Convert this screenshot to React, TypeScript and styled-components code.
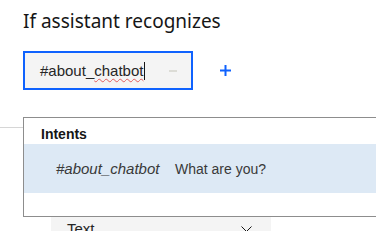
import React from 'react';
import styled, { createGlobalStyle } from 'styled-components';

const GlobalStyle = createGlobalStyle`
  html, body {
    margin: 0;
    padding: 0;
    background: #ffffff;
    overflow: hidden;
  }
  body {
    font-family: "Noto Sans", "Liberation Sans", sans-serif;
    color: #161616;
  }
`;

const Page = styled.div`
  width: 376px;
  height: 231px;
  position: relative;
  overflow: hidden;
`;

const Header = styled.div`
  padding: 7px 0 0 23px;
`;

const Title = styled.h2`
  margin: 0;
  font-family: "Noto Sans", sans-serif;
  font-weight: 400;
  font-size: 19px;
  line-height: 28px;
  color: #161616;
`;

const ConditionRow = styled.div`
  display: flex;
  align-items: center;
  gap: 26px;
  margin-top: 16px;
`;

const InputBox = styled.div`
  box-sizing: border-box;
  width: 170px;
  height: 39px;
  border: 2px solid #0f62fe;
  background: #f4f4f4;
  display: flex;
  align-items: center;
  padding: 0 14px 0 15px;
`;

const InputText = styled.span`
  flex: 1;
  font-family: "Liberation Sans", Arial, sans-serif;
  font-size: 15px;
  color: #262626;
  display: flex;
  align-items: center;
`;

const Squiggle = styled.span`
  text-decoration: underline wavy #e25c5c;
  text-decoration-thickness: 1px;
  text-underline-offset: 2px;
`;

const Caret = styled.span`
  display: inline-block;
  width: 1px;
  height: 18px;
  background: #161616;
  margin-left: 1px;
`;

const Minus = styled.span`
  width: 8px;
  height: 2px;
  background: #dcdcd6;
`;

const IconButton = styled.button`
  border: none;
  background: none;
  padding: 0;
  width: 12px;
  height: 12px;
  display: flex;
  align-items: center;
  justify-content: center;
  cursor: pointer;
`;

const Section = styled.div`
  position: relative;
  margin-top: 27px;
  height: 114px;
`;

const Divider = styled.div`
  position: absolute;
  top: 10px;
  left: 0;
  right: 0;
  height: 1px;
  background: #d6d6d6;
`;

const SelectBox = styled.div`
  position: absolute;
  top: 100px;
  left: 51px;
  width: 220px;
  height: 40px;
  background: #f4f4f4;
  display: flex;
  align-items: flex-start;
  justify-content: space-between;
  box-sizing: border-box;
  padding: 2px 19px 0 16px;
  font-family: "Liberation Sans", Arial, sans-serif;
  font-size: 15px;
  color: #262626;
  line-height: 19px;
`;

const Chevron = styled.svg`
  margin-top: 7px;
`;

const Menu = styled.div`
  position: absolute;
  top: 0;
  left: 23px;
  width: 380px;
  height: 100px;
  box-sizing: border-box;
  border: 1px solid #8d8d8d;
  background: #ffffff;
`;

const MenuHeading = styled.div`
  height: 26px;
  box-sizing: border-box;
  padding: 8px 0 0 17px;
  font-family: "Liberation Sans", Arial, sans-serif;
  font-weight: 700;
  font-size: 14px;
  line-height: 16px;
  color: #161616;
`;

const MenuItem = styled.div<{ $active?: boolean }>`
  height: 49px;
  display: flex;
  align-items: center;
  padding-left: 32px;
  background: ${p => (p.$active ? '#dde9f5' : 'transparent')};
  font-family: "Liberation Sans", Arial, sans-serif;
  font-size: 15px;
  color: #393939;
`;

const IntentName = styled.span`
  font-style: italic;
  width: 119px;
`;

const Example = styled.span`
  font-size: 14px;
`;

export default function App() {
  return (
    <Page>
      <GlobalStyle />
      <Header>
        <Title>If assistant recognizes</Title>
        <ConditionRow>
          <InputBox>
            <InputText>
              #about_<Squiggle>chatbot</Squiggle>
              <Caret />
            </InputText>
            <Minus />
          </InputBox>
          <IconButton aria-label="Add condition">
            <svg width="11" height="11" viewBox="0 0 11 11">
              <path d="M5.5 0v11M0 5.5h11" stroke="#0f62fe" strokeWidth="2" />
            </svg>
          </IconButton>
        </ConditionRow>
      </Header>
      <Section>
        <Divider />
        <SelectBox>
          <span>Text</span>
          <Chevron width="11" height="6" viewBox="0 0 11 6">
            <path d="M0.5 0.5L5.5 5.5L10.5 0.5" stroke="#161616" strokeWidth="1" fill="none" />
          </Chevron>
        </SelectBox>
        <Menu>
          <MenuHeading>Intents</MenuHeading>
          <MenuItem $active>
            <IntentName>#about_chatbot</IntentName>
            <Example>What are you?</Example>
          </MenuItem>
        </Menu>
      </Section>
    </Page>
  );
}
